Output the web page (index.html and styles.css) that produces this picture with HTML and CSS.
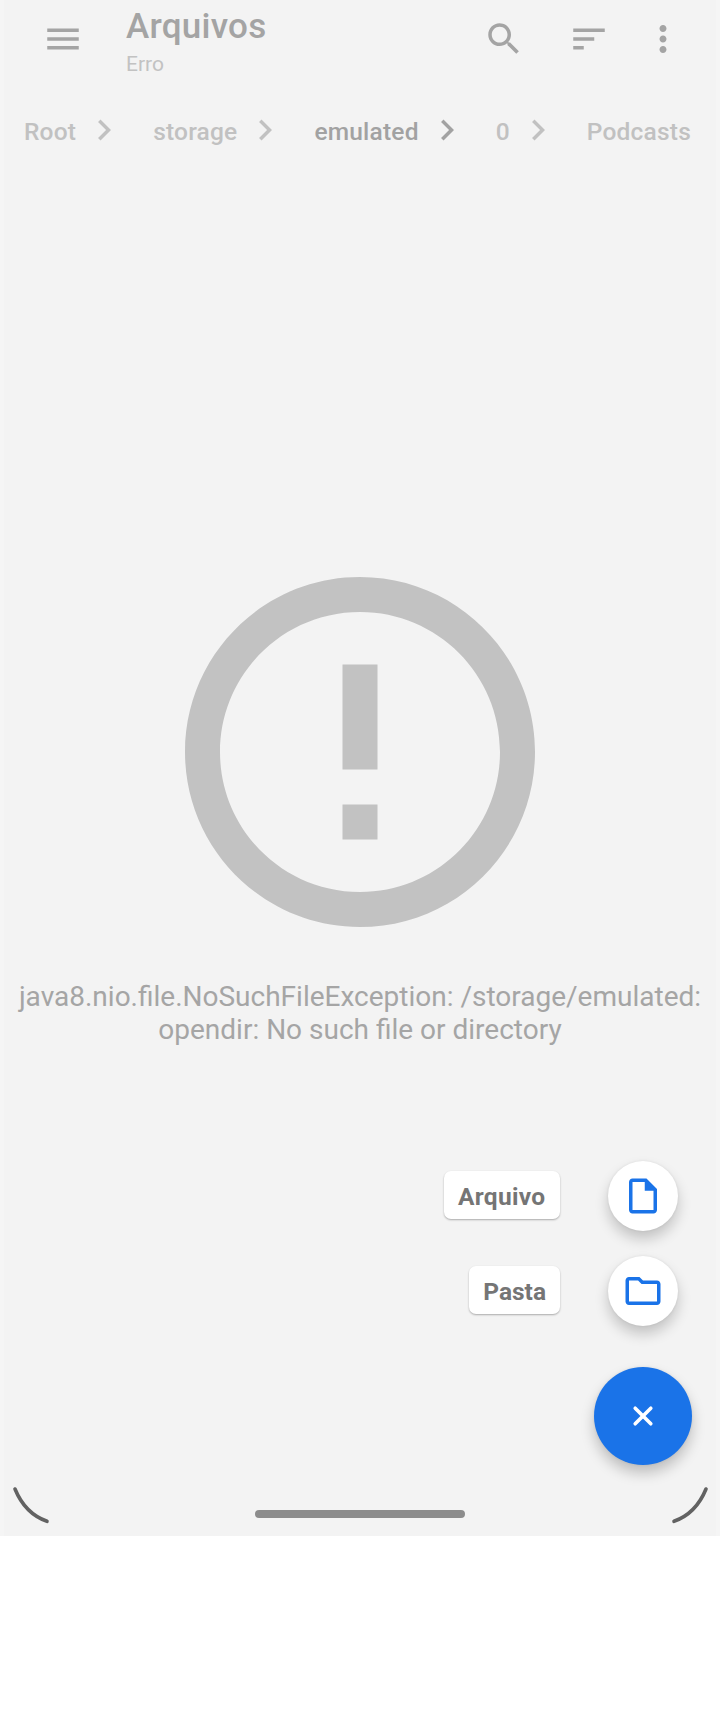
FILE: index.html
```html
<!DOCTYPE html>
<html lang="pt-BR">
<head>
<meta charset="utf-8">
<title>Arquivos</title>
<link rel="stylesheet" href="styles.css">
</head>
<body>
<div class="screen">
  <header class="toolbar">
    <svg class="icon menu" viewBox="0 0 24 24"><path d="M3 18h18v-2H3v2zm0-5h18v-2H3v2zm0-7v2h18V6H3z"/></svg>
    <div class="titles">
      <h1 class="title">Arquivos</h1>
      <p class="subtitle">Erro</p>
    </div>
    <svg class="icon search" viewBox="0 0 24 24"><path d="M15.5 14h-.79l-.28-.27C15.41 12.59 16 11.11 16 9.5 16 5.91 13.09 3 9.5 3S3 5.91 3 9.5 5.91 16 9.5 16c1.61 0 3.09-.59 4.23-1.57l.27.28v.79l5 4.99L20.49 19l-4.99-5zm-6 0C7.01 14 5 11.99 5 9.5S7.01 5 9.5 5 14 7.01 14 9.5 11.99 14 9.5 14z"/></svg>
    <svg class="icon sort" viewBox="0 0 24 24"><path d="M3 18h6v-2H3v2zM3 6v2h18V6H3zm0 7h12v-2H3v2z"/></svg>
    <svg class="icon more" viewBox="0 0 24 24"><path d="M12 8c1.100 0 2-.9 2-2s-.9-2-2-2-2 .9-2 2 .9 2 2 2zm0 2c-1.100 0-2 .9-2 2s.9 2 2 2 2-.9 2-2-.9-2-2-2zm0 6c-1.100 0-2 .9-2 2s.9 2 2 2 2-.9 2-2-.9-2-2-2z"/></svg>
  </header>
  <nav class="crumbs">
    <span class="crumb"><span>Root</span><svg class="icon" viewBox="0 0 24 24"><path d="M10 6L8.590 7.410 13.170 12l-4.580 4.590L10 18l6-6z"/></svg></span>
    <span class="crumb"><span>storage</span><svg class="icon" viewBox="0 0 24 24"><path d="M10 6L8.590 7.410 13.170 12l-4.580 4.590L10 18l6-6z"/></svg></span>
    <span class="crumb current"><span>emulated</span><svg class="icon" viewBox="0 0 24 24"><path d="M10 6L8.590 7.410 13.170 12l-4.580 4.590L10 18l6-6z"/></svg></span>
    <span class="crumb"><span>0</span><svg class="icon" viewBox="0 0 24 24"><path d="M10 6L8.590 7.410 13.170 12l-4.580 4.590L10 18l6-6z"/></svg></span>
    <span class="crumb"><span>Podcasts</span></span>
  </nav>
  <main class="error">
    <svg class="error-icon" viewBox="0 0 24 24"><path d="M11 15h2v2h-2zm0-8h2v6h-2zm.99-5C6.470 2 2 6.480 2 12s4.470 10 9.990 10C17.520 22 22 17.520 22 12S17.520 2 11.990 2zM12 20c-4.420 0-8-3.580-8-8s3.580-8 8-8 8 3.580 8 8-3.580 8-8 8z"/></svg>
    <p class="error-text">java8.nio.file.NoSuchFileException: /storage/emulated:<br>opendir: No such file or directory</p>
  </main>
  <div class="speed-dial">
    <div class="action">
      <span class="label wide">Arquivo</span>
      <span class="mini-fab"><svg class="icon" viewBox="0 0 24 24"><path d="M14 2H6c-1.100 0-1.990.9-1.990 2L4 20c0 1.100.89 2 1.990 2H18c1.100 0 2-.9 2-2V8l-6-6zM6 20V4h7v5h5v11H6z"/></svg></span>
    </div>
    <div class="action">
      <span class="label">Pasta</span>
      <span class="mini-fab"><svg class="icon" viewBox="0 0 24 24"><path d="M9.170 6l2 2H20v10H4V6h5.170M10 4H4c-1.100 0-1.990.9-1.990 2L2 18c0 1.100.9 2 2 2h16c1.100 0 2-.9 2-2V8c0-1.100-.9-2-2-2h-8l-2-2z"/></svg></span>
    </div>
    <div class="fab"><svg class="close" viewBox="0 0 20 20"><path d="M2.200 2.200l15.600 15.600M17.800 2.200L2.200 17.800"/></svg></div>
  </div>
  <svg class="corner left" viewBox="0 0 36 36"><path d="M2 2Q12 26.500 34 34.300"/></svg>
  <svg class="corner right" viewBox="0 0 36 36"><path d="M34 2Q24 26.500 2 34.300"/></svg>
  <div class="home-bar"></div>
</div>
</body>
</html>
```
FILE: styles.css
```css
* { box-sizing: border-box; }
body {
  margin: 0;
  background: #fff;
  font-family: Roboto, "Liberation Sans", sans-serif;
}
svg { display: block; flex: none; overflow: visible; }
h1, p { margin: 0; }
.screen {
  position: relative;
  display: flex;
  flex-direction: column;
  width: 720px;
  height: 1536px;
  background: #f3f3f3;
  border: solid #f5f5f5;
  border-width: 0 4px;
}
.icon { width: 42px; height: 42px; fill: currentColor; }
.toolbar {
  display: flex;
  align-items: flex-start;
  height: 98px;
  padding: 18px 32px 0 38px;
  color: #a4a4a4;
}
.titles { flex: 1; margin: -12px 0 0 42px; }
.title {
  font-size: 35px;
  font-weight: 500;
  line-height: 41px;
  letter-spacing: .25px;
}
.subtitle { font-size: 21px; line-height: 25px; margin-top: 5px; color: #c2c2c2; }
.search { margin-right: 43px; }
.sort { margin-right: 32px; }
.crumbs {
  display: flex;
  gap: 28px;
  height: 66px;
  padding: 11px 0 0 20px;
  font-size: 24.5px;
  font-weight: 500;
  line-height: 46px;
  letter-spacing: .2px;
  color: #c1c1c1;
}
.crumb { display: flex; gap: 7px; white-space: nowrap; }
.current { color: #a2a2a2; }
.error {
  display: flex;
  flex-direction: column;
  align-items: center;
  padding-top: 378px;
}
.error-icon { width: 420px; height: 420px; fill: #c2c2c2; }
.error-text {
  margin-top: 18px;
  font-size: 28px;
  line-height: 33px;
  text-align: center;
  white-space: nowrap;
  color: #a5a5a5;
}
.speed-dial {
  position: absolute;
  right: 24px;
  top: 1161px;
  display: flex;
  flex-direction: column;
  align-items: flex-end;
}
.action {
  display: flex;
  align-items: center;
  gap: 48px;
  margin: 0 14px 25px 0;
}
.label {
  height: 48px;
  margin-bottom: 2px;
  padding: 0 14px;
  border-radius: 7px;
  background: #fff;
  box-shadow: 0 1px 2px rgba(0, 0, 0, .3);
  font-size: 24.5px;
  font-weight: 700;
  line-height: 51px;
  color: #757575;
}
.wide { min-width: 116px; letter-spacing: .3px; }
.mini-fab, .fab {
  display: flex;
  align-items: center;
  justify-content: center;
  border-radius: 50%;
}
.mini-fab {
  width: 70px;
  height: 70px;
  background: #fff;
  color: #1a73e8;
  box-shadow: 0 8px 14px rgba(0, 0, 0, .2), 0 0 3px rgba(0, 0, 0, .08);
}
.fab {
  width: 98px;
  height: 98px;
  margin-top: 16px;
  background: #1a73e8;
  box-shadow: 0 8px 14px rgba(0, 0, 0, .22), 0 0 3px rgba(0, 0, 0, .08);
}
.close {
  width: 20px;
  height: 20px;
  fill: none;
  stroke: #fff;
  stroke-width: 3.6;
  stroke-linecap: round;
}
.corner {
  position: absolute;
  top: 1487px;
  width: 36px;
  height: 36px;
  fill: none;
  stroke: #626262;
  stroke-width: 3.6;
  stroke-linecap: round;
}
.left { left: 8.5px; }
.right { right: 8.5px; }
.home-bar {
  align-self: center;
  width: 210px;
  height: 8px;
  margin: auto 0 18px;
  border-radius: 4px;
  background: #8c8c8c;
}
```
